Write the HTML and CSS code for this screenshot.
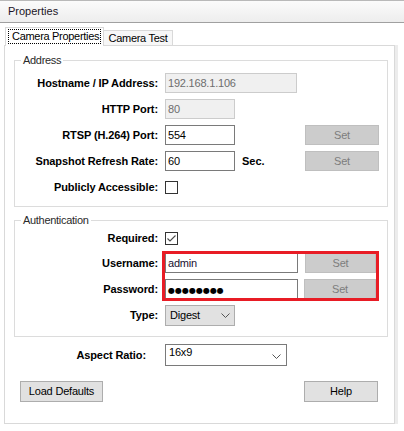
FILE: index.html
```
<!DOCTYPE html>
<html>
<head>
<meta charset="utf-8">
<link rel="stylesheet" href="styles.css">
</head>
<body>
<div class="titlebar">Properties</div>
<div class="tabs">
  <div class="tab active"><span class="focus">Camera Properties</span></div>
  <div class="tab">Camera Test</div>
</div>
<div class="panel">
  <fieldset class="group grp-address">
    <legend>Address</legend>
    <div class="row">
      <span class="lbl">Hostname / IP Address:</span>
      <div class="field dis w132">192.168.1.106</div>
    </div>
    <div class="row">
      <span class="lbl">HTTP Port:</span>
      <div class="field dis w70">80</div>
    </div>
    <div class="row">
      <span class="lbl">RTSP (H.264) Port:</span>
      <div class="field w70">554</div>
      <div class="set set-far">Set</div>
    </div>
    <div class="row">
      <span class="lbl">Snapshot Refresh Rate:</span>
      <div class="field w70">60</div>
      <span class="unit">Sec.</span>
      <div class="set">Set</div>
    </div>
    <div class="row">
      <span class="lbl">Publicly Accessible:</span>
      <span class="check"></span>
    </div>
  </fieldset>
  <fieldset class="group grp-auth">
    <legend>Authentication</legend>
    <div class="row">
      <span class="lbl">Required:</span>
      <span class="check"><svg width="11" height="11" viewBox="0 0 11 11"><polyline points="1.5,5.5 4,8 9.5,2.5" fill="none" stroke="#4a4a4a" stroke-width="1.1"/></svg></span>
    </div>
    <div class="cred">
      <div class="row row-user">
        <span class="lbl">Username:</span>
        <div class="field w133 user">admin</div>
        <div class="set set-user">Set</div>
      </div>
      <div class="row">
        <span class="lbl">Password:</span>
        <div class="field w133"><span class="dots">●●●●●●●●</span></div>
        <div class="set set-pass">Set</div>
      </div>
      <div class="highlight"></div>
    </div>
    <div class="row">
      <span class="lbl">Type:</span>
      <div class="combo combo-type"><span>Digest</span><svg width="9" height="5" viewBox="0 0 9 5"><polyline points="0.5,0.5 4.5,4.5 8.5,0.5" fill="none" stroke="#555" stroke-width="1"/></svg></div>
    </div>
  </fieldset>
  <div class="aspect">
    <span class="lbl lbl-aspect">Aspect Ratio:</span>
    <div class="combo combo-aspect"><span>16x9</span><svg width="9" height="5" viewBox="0 0 9 5"><polyline points="0.5,0.5 4.5,4.5 8.5,0.5" fill="none" stroke="#555" stroke-width="1"/></svg></div>
  </div>
  <div class="buttons">
    <div class="btn btn-load">Load Defaults</div>
    <div class="btn btn-help">Help</div>
  </div>
</div>
</body>
</html>
```

FILE: styles.css
```
html, body {
  margin: 0;
  padding: 0;
}
body {
  width: 404px;
  height: 431px;
  overflow: hidden;
  background: #ffffff;
  font-family: "Liberation Sans", Arial, sans-serif;
  font-size: 11px;
  color: #000;
}
.titlebar {
  box-sizing: border-box;
  height: 23px;
  border-top: 1px solid #b9b9b9;
  border-bottom: 1px solid #a0a0a0;
  background: linear-gradient(#fbfbfb, #ededed);
  padding-left: 8px;
  line-height: 20px;
  color: #1b1426;
}
.tabs {
  display: flex;
  align-items: flex-end;
  margin-top: 4px;
  padding-left: 5px;
  height: 18px;
  position: relative;
  z-index: 2;
}
.tab {
  box-sizing: border-box;
  height: 15px;
  border: 1px solid #d9d9d9;
  border-bottom: none;
  background: #f7f7f7;
  width: 70px;
  margin-left: -1px;
  text-align: center;
  line-height: 14px;
  letter-spacing: -0.3px;
}
.tab.active {
  width: 99px;
  height: 19px;
  margin-left: 0;
  margin-bottom: -1px;
  background: #fff;
  padding: 1px 2px 0 2px;
  text-align: left;
}
.focus {
  display: block;
  box-sizing: border-box;
  height: 15px;
  border: 1px dotted #000;
  padding-left: 3px;
  line-height: 13px;
}
.panel {
  box-sizing: border-box;
  margin-left: 4px;
  width: 391px;
  height: 379px;
  border: 1px solid #d9d9d9;
  padding: 7px 6px 0 9px;
  box-shadow: 3px 0 0 0 #ececec;
}
.group {
  margin: 0;
  border: 1px solid #dcdcdc;
  padding: 6px 5px 9px 6px;
}
.group legend {
  padding: 0 2px;
  line-height: 14px;
  color: #2a2a2a;
  letter-spacing: -0.3px;
}
.grp-auth {
  margin-top: 6px;
  padding-top: 1px;
  padding-bottom: 11px;
}
.row {
  display: flex;
  align-items: center;
  height: 20px;
  margin-top: 6px;
}
.group legend + .row {
  margin-top: 0;
}
.cred .row-user {
  margin-top: 5px;
}
.lbl {
  width: 137px;
  margin-right: 7px;
  text-align: right;
  font-weight: bold;
  white-space: nowrap;
  letter-spacing: -0.1px;
}
.field {
  box-sizing: border-box;
  height: 20px;
  border: 1px solid #7a7a7a;
  background: #fff;
  padding: 0 2px;
  line-height: 18px;
  letter-spacing: -0.2px;
  white-space: nowrap;
  overflow: hidden;
}
.field.dis {
  background: #f0f0f0;
  border-color: #cccccc;
  color: #6d6d6d;
}
.w132 { width: 132px; }
.w133 { width: 133px; }
.w70 { width: 70px; }
.user { color: #1a1030; }
.dots {
  font-family: "DejaVu Sans", sans-serif;
  font-size: 8px;
  letter-spacing: 0;
  color: #000;
}
.set {
  box-sizing: border-box;
  width: 74px;
  height: 20px;
  background: #cccccc;
  border: 1px solid #bfbfbf;
  color: #7d7d7d;
  text-align: center;
  line-height: 18px;
  letter-spacing: -0.2px;
}
.set-far { margin-left: 70px; }
.unit {
  width: 63px;
  margin-left: 7px;
  font-weight: bold;
}
.set-user {
  width: 71px;
  margin-left: 7px;
}
.set-pass {
  width: 72px;
  margin-left: 6px;
}
.check {
  box-sizing: border-box;
  width: 13px;
  height: 13px;
  border: 1px solid #333;
  background: #fff;
  display: flex;
}
.cred {
  position: relative;
}
.highlight {
  position: absolute;
  left: 141px;
  top: -2px;
  width: 217px;
  height: 50px;
  box-sizing: border-box;
  border: 3px solid #e81c25;
  pointer-events: none;
}
.combo {
  box-sizing: border-box;
  display: flex;
  justify-content: space-between;
  letter-spacing: -0.2px;
}
.combo-type {
  width: 70px;
  height: 21px;
  background: #e1e1e1;
  border: 1px solid #adadad;
  align-items: center;
  padding: 0 4px 0 4px;
  margin-top: 0;
}
.combo-type svg {
  margin-top: 1px;
}
.combo-aspect {
  width: 122px;
  height: 22px;
  background: #fff;
  border: 1px solid #7a7a7a;
  padding: 1px 5px 0 3px;
  line-height: 13px;
}
.combo-aspect svg {
  margin-top: 8px;
}
.aspect {
  display: flex;
  align-items: center;
  margin-top: 7px;
}
.lbl-aspect {
  width: 132px;
  margin-right: 19px;
}
.buttons {
  display: flex;
  justify-content: space-between;
  margin-top: 15px;
  padding: 0 10px 0 6px;
}
.btn {
  box-sizing: border-box;
  height: 21px;
  background: #e1e1e1;
  border: 1px solid #adadad;
  text-align: center;
  line-height: 19px;
  letter-spacing: -0.2px;
}
.btn-load { width: 83px; }
.btn-help { width: 74px; }
```
